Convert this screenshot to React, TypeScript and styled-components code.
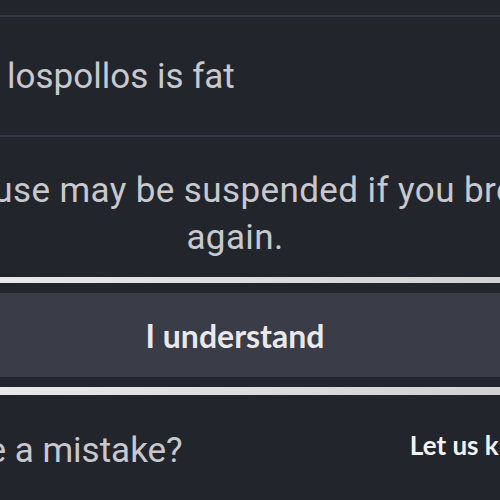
import React from "react";
import styled, { createGlobalStyle } from "styled-components";

const GlobalStyle = createGlobalStyle`
  html, body {
    margin: 0;
    padding: 0;
    background: #23252d;
    overflow: hidden;
  }

  body {
    width: 500px;
    height: 500px;
    font-family: Roboto, "Noto Sans", "DejaVu Sans", sans-serif;
    -webkit-font-smoothing: antialiased;
  }
`;

export default function App() {
  return (
    <>
      <GlobalStyle />
      <Viewport>
        <Modal>
          <Divider />
          <ReasonRow>lospollos is fat</ReasonRow>
          <Divider />
          <Notice>
            Your account's use may be suspended if you breach the rules
            <br />
            again.
          </Notice>
          <ButtonFrame>
            <UnderstandButton>I understand</UnderstandButton>
          </ButtonFrame>
          <Footer>
            <FooterText>Think we made a mistake?</FooterText>
            <FooterLink>Let us know</FooterLink>
          </Footer>
        </Modal>
      </Viewport>
    </>
  );
}

const Viewport = styled.div`
  width: 500px;
  height: 500px;
  overflow: hidden;
  background: #23252d;
`;

const Modal = styled.div`
  width: 1100px;
  margin-left: -315px;
  padding-top: 15px;
  display: flex;
  flex-direction: column;
`;

const Divider = styled.div`
  height: 2px;
  background: #353844;
`;

const ReasonRow = styled.div`
  height: 118px;
  display: flex;
  align-items: center;
  padding-left: 322px;
  font-size: 35px;
  color: #c8c9ce;
`;

const Notice = styled.p`
  margin: 0;
  padding-top: 30px;
  height: 140px;
  box-sizing: border-box;
  text-align: center;
  font-size: 35px;
  line-height: 47px;
  letter-spacing: 0.4px;
  color: #c8c9ce;
  white-space: nowrap;
`;

const ButtonFrame = styled.div`
  display: flex;
  flex-direction: column;
  padding: 10px 0;
  border-top: 6px solid #eeeeee;
  border-bottom: 8px solid #a3a3a5;
  border-image: linear-gradient(90deg, #f6f6f6, #c4c4c6) 1;
  border-image-slice: 6 0 8 0;
`;

const UnderstandButton = styled.button`
  height: 84px;
  border: none;
  background: #3a3c48;
  color: #e9e9ec;
  font-family: Lato, Roboto, sans-serif;
  font-size: 32px;
  font-weight: 700;
  cursor: pointer;
`;

const Footer = styled.div`
  display: flex;
  align-items: center;
  justify-content: space-between;
  height: 110px;
  padding: 0 236px 0 85px;
`;

const FooterText = styled.span`
  font-size: 35px;
  color: #c8c9ce;
`;

const FooterLink = styled.span`
  margin-bottom: 10px;
  font-family: Lato, Roboto, sans-serif;
  font-size: 26px;
  font-weight: 700;
  color: #f2f2f4;
`;
